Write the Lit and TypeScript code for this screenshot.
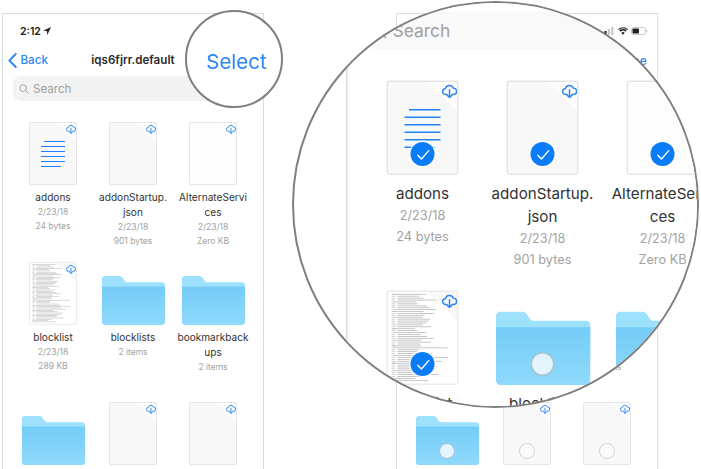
import { LitElement, html, css, svg } from "lit";
import { customElement, property } from "lit/decorators.js";

type Item = {
  kind: "doc" | "text" | "thumb" | "blank" | "folder";
  name: string;
  meta: string[];
};

const ITEMS: Item[] = [
  { kind: "text", name: "addons", meta: ["2/23/18", "24 bytes"] },
  { kind: "doc", name: "addonStartup.\u200Bjson", meta: ["2/23/18", "901 bytes"] },
  { kind: "blank", name: "AlternateServi\u200Bces", meta: ["2/23/18", "Zero KB"] },
  { kind: "thumb", name: "blocklist", meta: ["2/23/18", "289 KB"] },
  { kind: "folder", name: "blocklists", meta: ["2 items"] },
  { kind: "folder", name: "bookmarkback\u200Bups", meta: ["2 items"] },
  { kind: "folder", name: "", meta: [] },
  { kind: "doc", name: "", meta: [] },
  { kind: "doc", name: "", meta: [] },
];

const thumbLines = () => {
  const out = [];
  let seed = 7;
  for (let i = 0; i < 46; i++) {
    seed = (seed * 37 + 11) % 101;
    const indent = i % 9 === 0 ? 3 : i % 4 === 0 ? 5 : 6.5;
    const w = 14 + (seed % 26) * (i < 26 ? 0.6 : 0.9);
    const y = 1 + i * 1.33;
    out.push(svg`<rect x="2.5" y=${y} width="2.5" height=".55" fill="#c4c4c4"/>`);
    out.push(svg`<rect x=${indent} y=${y} width=${Math.min(w, 42 - indent)} height=".55" fill="#b8b8b8"/>`);
  }
  return out;
};

const cloud = html`<svg class="cloud" viewBox="0 0 24 24" fill="none" stroke="#2a86f5" stroke-width="2.3" stroke-linecap="round" stroke-linejoin="round"><path d="M8 17.5H6a4.6 4.6 0 0 1-.6-9.2A6.6 6.6 0 0 1 18 7.4a5 5 0 0 1 .5 10.1H16"/><path d="M12 10v12.5M8.5 19l3.5 3.5 3.5-3.5"/></svg>`;

const folder = html`<svg class="folder" viewBox="0 0 63 49"><defs><linearGradient id="ff" x1="0" y1="0" x2="0" y2="1"><stop offset="0" stop-color="#74ccf7"/><stop offset="1" stop-color="#90daFC"/></linearGradient></defs><path fill="#9ee1fd" d="M0 3a3 3 0 0 1 3-3h14c2 0 3 .8 4 2.4l1.6 2.4c.6 1 1.5 1.4 2.6 1.4H60a3 3 0 0 1 3 3V30H0z"/><path fill="url(#ff)" d="M0 10.5h63V46a3 3 0 0 1-3 3H3a3 3 0 0 1-3-3z"/></svg>`;

@customElement("phone-screen")
class PhoneScreen extends LitElement {
  @property({ type: Boolean }) edit = false;
  @property({ type: Boolean }) checked = false;

  static styles = css`
    :host { display: block; width: 262px; height: 456px; }
    .phone {
      box-sizing: border-box; width: 262px; height: 456px; overflow: hidden;
      background: #fff; border: 1px solid #dcdcdc; border-bottom: 0;
      font-family: Inter, "Liberation Sans", sans-serif; color: #2e2e2e;
    }
    .status { height: 33px; display: flex; align-items: center; justify-content: space-between; padding: 1px 9px 0 17px; box-sizing: border-box; }
    .time { display: flex; align-items: center; gap: 2.5px; font-size: 10.5px; font-weight: 600; color: #222; }
    .arrow { width: 8px; height: 8px; }
    .icons { display: flex; align-items: center; gap: 3px; }
    .signal { width: 14px; height: 8px; }
    .wifi { width: 10px; height: 8px; }
    .battery { width: 17px; height: 8px; }
    .nav { height: 26px; display: grid; grid-template-columns: 1fr auto 1fr; align-items: center; padding: 0 10px; }
    .back { display: flex; align-items: center; gap: 3.5px; color: #2a86f5; font-size: 11.6px; font-weight: 500; margin-left: -5px; }
    .chev { width: 9px; height: 15px; }
    .title { font-size: 11.6px; font-weight: 600; color: #2b2b2b; }
    .action { justify-self: end; color: #2a86f5; font-size: 12.5px; font-weight: 500; }
    .search {
      margin: 3px 0 21px 10px; height: 25px; border-radius: 8px; background: #f3f3f4;
      display: flex; align-items: center; gap: 4px; padding-left: 6px; color: #a0a0a0; font-size: 11.6px;
    }
    .search.faint { background: #f9f9f9; }
    .glass { width: 10px; height: 10px; }
    .grid { display: grid; grid-template-columns: repeat(3, 80px); grid-auto-rows: 140px; margin-left: 10px; }
    .cell { display: flex; flex-direction: column; align-items: center; text-align: center; }
    .box { position: relative; width: 64px; height: 63px; display: flex; justify-content: center; align-items: flex-end; flex: none; }
    .doc {
      position: relative; box-sizing: border-box; width: 48px; height: 63px; border-radius: 2px;
      border: 1px solid #e6e6e6; overflow: hidden;
      background: linear-gradient(225deg, #fdfdfd 13.5px, #f8f8f8 14px);
    }
    .doc.blank { background: linear-gradient(225deg, #ffffff 13.5px, #fdfdfd 14px); }
    .doc.thumb { background: #fff; border-color: #ececec; }
    .fold { position: absolute; top: 0; right: 0; width: 20px; height: 20px; background: linear-gradient(225deg, #f8f8f8 13.5px, transparent 14px); }
    .thumb-art { position: absolute; inset: 0; width: 100%; height: 100%; }
    .cloud { position: absolute; top: 1px; right: .5px; width: 10px; height: 10px; }
    .lines { position: absolute; top: 18px; left: 10.5px; width: 24.5px; display: flex; flex-direction: column; gap: 3.65px; align-items: flex-start; }
    .lines i { display: block; height: 1.3px; background: #2182fb; width: 100%; }
    .lines i.first { width: 21.5px; margin-left: 3px; }
    .lines i.last { width: 20.5px; }
    .folder { width: 63px; height: 49px; display: block; }
    .dot {
      position: absolute; left: 24px; top: 41px; width: 16px; height: 16px; box-sizing: border-box;
      border-radius: 50%; display: flex; align-items: center; justify-content: center;
    }
    .dot.empty { border: 1px solid #d4d4d4; background: #fbfbfb; }
    .dot.onfolder { border: 1px solid #a5c3d2; background: #e4f4fc; }
    .dot.on { background: #0b7cf8; box-shadow: 0 0 0 1px rgba(255,255,255,.7); }
    .dot svg { width: 11px; height: 11px; }
    .name { margin-top: 4.5px; font-size: 10.1px; line-height: 15px; color: #333; width: 80px; }
    .meta { font-size: 8.5px; line-height: 14px; color: #a3a3a3; }
  `;

  private doc(it: Item) {
    const cls = it.kind === "blank" ? "doc blank" : it.kind === "thumb" ? "doc thumb" : "doc";
    return html`<div class=${cls}>
      ${it.kind === "thumb" ? html`<svg class="thumb-art" viewBox="0 0 48 63">${thumbLines()}</svg><div class="fold"></div>` : ""}
      ${it.kind === "text" ? html`<div class="lines"><i class="first"></i><i></i><i></i><i></i><i></i><i class="last"></i></div>` : ""}
      ${cloud}
    </div>`;
  }

  private dot(it: Item) {
    if (!this.edit) return "";
    if (it.kind === "folder") return html`<div class="dot onfolder"></div>`;
    if (this.checked) return html`<div class="dot on"><svg viewBox="0 0 12 12" fill="none" stroke="#fff" stroke-width="1" stroke-linecap="round" stroke-linejoin="round"><path d="M2 6.4l2.700 2.700L10 3"/></svg></div>`;
    return html`<div class="dot empty"></div>`;
  }

  render() {
    return html`<div class="phone">
      <div class="status">
        <span class="time">2:12
          <svg class="arrow" viewBox="0 0 10 10"><path fill="#222" d="M10 0L0 4.600l4.800.5.6 4.900z"/></svg>
        </span>
        <span class="icons">
          <svg class="signal" viewBox="0 0 14 8"><rect x="0" y="5.500" width="2.200" height="2.500" fill="#222"/><rect x="3.400" y="4" width="2.200" height="4" fill="#222"/><rect x="6.800" y="2" width="2.200" height="6" fill="#c8c8c8"/><rect x="10.200" y="0" width="2.200" height="8" fill="#c8c8c8"/></svg>
          <svg class="wifi" viewBox="0 0 12 9"><path fill="#222" d="M6 9L3.900 6.600a3 3 0 0 1 4.200 0zM2.900 5.500L1.600 4a6.400 6.400 0 0 1 8.800 0L9.100 5.500a4.500 4.500 0 0 0-6.200 0zM.9 3.300L0 2.300a8.700 8.700 0 0 1 12 0l-.9 1a7.400 7.400 0 0 0-10.200 0z"/></svg>
          <svg class="battery" viewBox="0 0 17 8"><rect x=".5" y=".5" width="14" height="7" rx="1.800" fill="none" stroke="#bbb" stroke-width=".8"/><rect x="1.500" y="1.500" width="6.500" height="5" rx=".8" fill="#222"/><path d="M15.500 2.700c.8.200 1 .7 1 1.300s-.2 1.100-1 1.300z" fill="#bbb"/></svg>
        </span>
      </div>
      <div class="nav">
        <span class="back">
          <svg class="chev" viewBox="0 0 9 15" fill="none" stroke="#2a86f5" stroke-width="1.800" stroke-linecap="round" stroke-linejoin="round"><path d="M7.800 1L1.300 7.500l6.500 6.500"/></svg>
          ${this.edit ? "Select" : "Back"}
        </span>
        <span class="title">iqs6fjrr.default</span>
        <span class="action">${this.edit ? "Done" : "Select"}</span>
      </div>
      <div class=${this.checked ? "search faint" : "search"}>
        <svg class="glass" viewBox="0 0 12 12" fill="none" stroke="#a3a3a3" stroke-width="1.200" stroke-linecap="round"><circle cx="5" cy="5" r="4"/><path d="M8 8l3.300 3.300"/></svg>
        Search
      </div>
      <div class="grid">
        ${ITEMS.map(
          (it) => html`<div class="cell">
            <div class="box">${it.kind === "folder" ? folder : this.doc(it)}${this.dot(it)}</div>
            ${it.name ? html`<div class="name">${it.name}</div>` : ""}
            ${it.meta.map((m) => html`<div class="meta">${m}</div>`)}
          </div>`
        )}
      </div>
    </div>`;
  }
}

@customElement("app-root")
class AppRoot extends LitElement {
  static styles = css`
    :host { display: block; width: 701px; height: 469px; background: #fff; overflow: hidden; }
    .stage {
      position: relative; width: 701px; height: 469px; overflow: hidden; box-sizing: border-box;
      display: flex; gap: 132px; padding: 13px 0 0 2px; filter: blur(.45px);
      font-family: Inter, "Liberation Sans", sans-serif;
    }
    .lens {
      position: absolute; box-sizing: border-box; border-radius: 50%; background: #fff;
      border: 2px solid #7f7f7f; overflow: hidden;
    }
    .small { left: 185px; top: 10px; width: 98px; height: 98px; display: flex; align-items: center; justify-content: center; }
    .select { color: #2a86f5; font-size: 20.5px; margin-top: 5px; margin-left: 5px; }
    .big { left: 292px; top: 1px; width: 407px; height: 407px; }
    .magnified { position: absolute; left: 52px; top: -86.500px; transform: scale(1.5); transform-origin: 0 0; }
  `;
  render() {
    return html`<div class="stage">
      <phone-screen></phone-screen>
      <phone-screen edit></phone-screen>
      <div class="lens small"><span class="select">Select</span></div>
      <div class="lens big"><phone-screen class="magnified" edit checked></phone-screen></div>
    </div>`;
  }
}
